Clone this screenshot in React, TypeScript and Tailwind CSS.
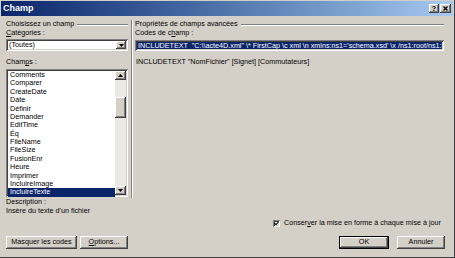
const fields = [
  "Comments",
  "Comparer",
  "CreateDate",
  "Date",
  "Définir",
  "Demander",
  "EditTime",
  "Éq",
  "FileName",
  "FileSize",
  "FusionEnr",
  "Heure",
  "Imprimer",
  "IncluireImage",
  "IncluireTexte",
];

const raised = "shadow-[inset_-1px_-1px_#404040,inset_1px_1px_#ffffff,inset_-2px_-2px_#808080]";
const sunken = "shadow-[inset_1px_1px_#808080,inset_-1px_-1px_#ffffff,inset_2px_2px_#404040,inset_-2px_-2px_#d4d0c8]";

const Arrow = ({ up }: { up?: boolean }) => (
  <svg width="5" height="3" viewBox="0 0 5 3">
    <polygon points={up ? "2.5,0 5,3 0,3" : "0,0 5,0 2.5,3"} fill="#000" />
  </svg>
);

const GroupTitle = ({ label }: { label: string }) => (
  <div className="flex h-[9px] items-center">
    <span className="whitespace-nowrap">{label}</span>
    <div className="ml-[3px] h-[2px] flex-1 border-t border-b border-t-[#808080] border-b-white" />
  </div>
);

export default function App() {
  return (
    <div className="flex h-[258px] w-[455px] flex-col overflow-hidden border-r border-b border-[#404040] bg-[#d4d0c8] font-['Liberation_Sans',Arial,sans-serif] text-[7.2px] text-black">
      {/* title bar */}
      <div className="px-[1px] pt-[1px]">
        <div className="flex h-[15px] items-center justify-between bg-gradient-to-r from-[#0a246a] to-[#a6caf0] pl-[2px] pr-[2px]">
          <span className="text-[9px] font-bold text-white">Champ</span>
          <div className="flex gap-[1px]">
            <div className={`flex h-[9px] w-[10px] items-center justify-center text-[7px] font-bold leading-none bg-[#d4d0c8] ${raised}`}>?</div>
            <div className={`flex h-[9px] w-[11px] items-center justify-center bg-[#d4d0c8] ${raised}`}>
              <svg width="5" height="5" viewBox="0 0 5 5">
                <path d="M0.5 0.5 L4.5 4.5 M4.5 0.5 L0.5 4.5" stroke="#000" strokeWidth="1.3" />
              </svg>
            </div>
          </div>
        </div>
      </div>

      {/* main area */}
      <div className="flex pr-[10px]">
        {/* left */}
        <div className="flex w-[131px] shrink-0 flex-col pl-[6px] pr-[3px] pt-[4px]">
          <GroupTitle label="Choisissez un champ" />
          <div className="flex h-[9px] items-center">
            <span>
              <span className="underline">C</span>atégories :
            </span>
          </div>
          <div className={`mt-[1px] flex h-[12px] items-center justify-between bg-white pl-[3px] pr-[2px] ${sunken}`}>
            <span>(Toutes)</span>
            <div className={`flex h-[8px] w-[10px] items-center justify-center bg-[#d4d0c8] ${raised}`}>
              <Arrow />
            </div>
          </div>
          <div className="mt-[7px] flex h-[9px] items-center">
            <span>
              Cham<span className="underline">p</span>s :
            </span>
          </div>
          <div className={`mt-[2px] flex h-[128px] bg-white p-[2px] ${sunken}`}>
            <div className="flex flex-1 flex-col">
              {fields.map((f) => (
                <div
                  key={f}
                  className={`h-[8.38px] pl-[2px] leading-[8.38px] whitespace-nowrap ${
                    f === "IncluireTexte" ? "bg-[#0a246a] text-white" : ""
                  }`}
                >
                  {f}
                </div>
              ))}
            </div>
            <div className="flex w-[11px] flex-col">
              <div className={`flex h-[9px] items-center justify-center bg-[#d4d0c8] ${raised}`}>
                <Arrow up />
              </div>
              <div className="flex-1 bg-[#ebe9e5] pt-[17px]">
                <div className={`h-[21px] bg-[#d4d0c8] ${raised}`} />
              </div>
              <div className={`flex h-[9px] items-center justify-center bg-[#d4d0c8] ${raised}`}>
                <Arrow />
              </div>
            </div>
          </div>
          <div className="mt-[1px] flex h-[9px] items-center whitespace-nowrap">Description :</div>
          <div className="flex h-[9px] items-center whitespace-nowrap">Insère du texte d'un fichier</div>
        </div>

        {/* separator */}
        <div className="mt-[4px] h-[178px] w-[2px] shrink-0 border-l border-r border-l-[#808080] border-r-white" />

        {/* right */}
        <div className="flex min-w-0 flex-1 flex-col pl-[2px] pt-[4px]">
          <GroupTitle label="Propriétés de champs avancées" />
          <div className="flex h-[9px] items-center">
            <span>
              Codes de c<span className="underline">h</span>amp :
            </span>
          </div>
          <div className={`mt-[2px] h-[11px] bg-white p-[2px] ${sunken}`}>
            <div className="h-full overflow-hidden whitespace-nowrap bg-[#0a246a] pl-[1px] leading-[7px] text-white">
              INCLUDETEXT &nbsp;"C:\\acte4D.xml" \* FirstCap \c xml \n xmlns:ns1='schema.xsd' \x /ns1:root/ns1:Pa
            </div>
          </div>
          <div className="mt-[6px] flex h-[10px] items-center pl-[1px]">
            INCLUDETEXT "NomFichier" [Signet] [Commutateurs]
          </div>
        </div>
      </div>

      {/* checkbox */}
      <div className="mt-[3px] flex h-[9px] items-center justify-end pr-[13px]">
        <div className={`mr-[4px] flex h-[7px] w-[7px] items-center justify-center bg-white ${sunken}`}>
          <svg width="5" height="5" viewBox="0 0 5 5">
            <path d="M0.6 2.2 L2 3.6 L4.4 1" stroke="#000" strokeWidth="1.1" fill="none" />
          </svg>
        </div>
        <span>
          Conser<span className="underline">v</span>er la mise en forme à chaque mise à jour
        </span>
      </div>

      {/* buttons */}
      <div className="mt-[8px] flex items-center pl-[6px] pr-[9px]">
        <div className={`flex h-[13px] w-[71px] items-center justify-center ${raised}`}>Masquer les codes</div>
        <div className={`ml-[3px] flex h-[13px] w-[48px] items-center justify-center ${raised}`}>
          <span>
            <span className="underline">O</span>ptions...
          </span>
        </div>
        <div className="flex-1" />
        <div className="flex h-[13px] w-[50px] items-center justify-center border border-black">
          <div className={`flex h-full w-full items-center justify-center ${raised}`}>OK</div>
        </div>
        <div className={`ml-[8px] flex h-[13px] w-[48px] items-center justify-center ${raised}`}>Annuler</div>
      </div>
    </div>
  );
}
